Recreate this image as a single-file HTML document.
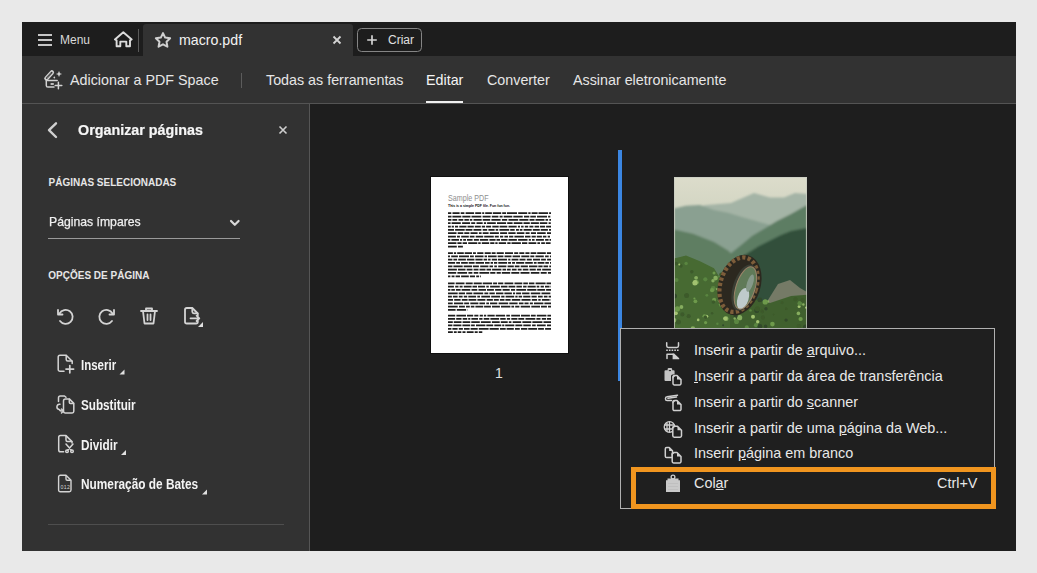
<!DOCTYPE html>
<html><head><meta charset="utf-8">
<style>
*{margin:0;padding:0;box-sizing:border-box}
html,body{width:1037px;height:573px;overflow:hidden;background:#e9e9e9;font-family:"Liberation Sans",sans-serif}
.a{position:absolute;white-space:nowrap;line-height:1}
#win{position:absolute;left:22px;top:22px;width:994px;height:529px;background:#1e1e1e;overflow:hidden}
#tabbar{position:absolute;left:0;top:0;width:994px;height:34px;background:#1d1d1d}
#tab{position:absolute;left:121px;top:2px;width:210px;height:32px;background:#323232;border-radius:3px 3px 0 0}
#toolbar{position:absolute;left:0;top:34px;width:994px;height:48px;background:#323232;border-bottom:1px solid #545454}
#panel{position:absolute;left:0;top:82px;width:288px;height:447px;background:#323232;border-right:1px solid #555555}
.t{color:#e6e6e6}
svg{position:absolute;overflow:visible}
</style></head>
<body>
<div id="win">
  <div id="tabbar"></div>
  <div id="tab"></div>
  <div id="toolbar"></div>
  <div id="panel"></div>
</div>

<!-- tab bar content (absolute page coords) -->
<svg style="left:0;top:0" width="1037" height="573" viewBox="0 0 1037 573">
  <g stroke="#c6c6c6" stroke-width="1.9" fill="none">
    <path d="M38 35H52M38 40H52M38 45H52"/>
  </g>
  <!-- home -->
  <path d="M123.3 32.2L114.9 39.5L116.6 40.3V46.3H120.3V41.6H126.3V46.3H130V40.3L131.7 39.5Z" stroke="#dcdcdc" stroke-width="1.9" fill="none" stroke-linejoin="round"/>
  <path d="M138.5 29V52" stroke="#5a5a5a" stroke-width="1"/>
  <!-- star -->
  <path d="M163.00 33.10L165.17 37.61L170.13 38.28L166.52 41.74L167.41 46.67L163.00 44.30L158.59 46.67L159.48 41.74L155.87 38.28L160.83 37.61Z" stroke="#d0d0d0" stroke-width="2" fill="none" stroke-linejoin="round"/>
  <!-- tab close -->
  <path d="M333.5 36.5L340.5 43.5M340.5 36.5L333.5 43.5" stroke="#d4d4d4" stroke-width="1.8"/>
  <!-- criar -->
  <rect x="357.5" y="28.5" width="64" height="23" rx="4" stroke="#858585" stroke-width="1" fill="none"/>
  <path d="M372 35.2V44.8M367.2 40H376.8" stroke="#d4d4d4" stroke-width="1.7"/>

  <!-- Adicionar icon -->
  <path d="M46.4 78.4L51.9 72.4" stroke="#d2d2d2" stroke-width="4.4" stroke-linecap="round"/>
  <path d="M46.6 78.1L51.7 72.6" stroke="#323232" stroke-width="1.6" stroke-linecap="round"/>
  <path d="M46.9 77.8L51.4 72.9" stroke="#bdbdbd" stroke-width="0.9" stroke-dasharray="0.9 0.7"/>
  <g stroke="#d2d2d2" stroke-width="1.5" fill="none" stroke-linecap="round" stroke-linejoin="round">
    <path d="M46.3 79.5V85.4A1.6 1.6 0 0 0 47.9 87H54"/>
    <path d="M47.5 80.4H57.2"/>
    <path d="M58.4 82.3V88.8M55.2 85.5H61.8"/>
  </g>
  <rect x="50.6" y="83" width="3.2" height="2" fill="#bcbcbc"/>
  <path d="M54.3 76.3L55.3 77.6L54.3 78.8L53.3 77.6Z" fill="#d2d2d2"/>
  <path d="M59 71L60 73.3L62.1 74L60 74.8L59 77.1L58 74.8L55.9 74L58 73.3Z" fill="#d2d2d2"/>
  <path d="M241.5 73V88" stroke="#5c5c5c" stroke-width="1"/>
  <!-- Editar underline -->
  <rect x="426" y="101" width="37" height="2" fill="#f0f0f0"/>
</svg>

<div class="a t" style="left:60px;top:34px;font-size:12px;color:#d9d9d9">Menu</div>
<div class="a t" style="left:179px;top:33.2px;font-size:14.2px;color:#f2f2f2">macro.pdf</div>
<div class="a t" style="left:388px;top:34px;font-size:12px;color:#e0e0e0">Criar</div>

<div class="a t" style="left:70px;top:72.9px;font-size:14.3px">Adicionar a PDF Space</div>
<div class="a t" style="left:266px;top:72.9px;font-size:14.3px">Todas as ferramentas</div>
<div class="a t" style="left:426px;top:72.9px;font-size:14.3px;color:#f5f5f5">Editar</div>
<div class="a t" style="left:487px;top:72.9px;font-size:14.3px">Converter</div>
<div class="a t" style="left:573px;top:72.9px;font-size:14.3px">Assinar eletronicamente</div>

<!-- LEFT PANEL -->
<svg style="left:0;top:0" width="1037" height="573" viewBox="0 0 1037 573">
  <path d="M56 123.3L49 130.2L56 137" stroke="#d0d0d0" stroke-width="2.4" fill="none" stroke-linecap="round" stroke-linejoin="round"/>
  <path d="M279.5 126.5L286.5 133.5M286.5 126.5L279.5 133.5" stroke="#cfcfcf" stroke-width="1.6"/>
  <path d="M231 221L234.8 224.8L238.6 221" stroke="#d8d8d8" stroke-width="2.2" fill="none" stroke-linecap="round" stroke-linejoin="round"/>
  <rect x="48" y="238" width="192" height="1" fill="#9a9a9a"/>
  <!-- undo -->
  <g stroke="#d4d4d4" stroke-width="1.8" fill="none" stroke-linecap="round" stroke-linejoin="round">
    <path d="M59.5 313.5A7 7 0 1 1 60 321"/>
    <path d="M58 310V314.5H62.5"/>
    <!-- redo -->
    <path d="M112.5 313.5A7 7 0 1 0 112 321"/>
    <path d="M114 310V314.5H109.5"/>
    <!-- trash -->
    <path d="M141 311H157"/>
    <path d="M146 311V308.5H152V311"/>
    <path d="M143 311L144.5 323.5H153.5L155 311"/>
    <path d="M147.5 314.5V320M150.5 314.5V320"/>
    <!-- extract -->
    <path d="M197.8 315.5V313.5L192.3 308H186.8A1.8 1.8 0 0 0 185 309.8V321.7A1.8 1.8 0 0 0 186.8 323.5H196A1.8 1.8 0 0 0 197.8 321.7V321"/>
    <path d="M192.3 308.3V311.8A1.5 1.5 0 0 0 193.8 313.3H197.5"/>
    <path d="M190.5 318.3H199.3M196.6 315.6L199.3 318.3L196.6 321"/>
  </g>
  <path d="M203 322V327H198Z" fill="#e0e0e0"/>
  <!-- inserir -->
  <g stroke="#d4d4d4" stroke-width="1.5" fill="none" stroke-linecap="round" stroke-linejoin="round">
    <path d="M64 371.3H60A1.8 1.8 0 0 1 58.2 369.5V357A1.8 1.8 0 0 1 60 355.2H66.2L72.2 361.2V363.5"/>
    <path d="M66.2 355.5V359.5A1.5 1.5 0 0 0 67.7 361H72"/>
    <path d="M69.8 365.5V372.8M66 369.1H73.6" stroke-width="1.7"/>
  </g>
  <path d="M124.5 369.5V374.5H119.5Z" fill="#e0e0e0"/>
  <!-- substituir -->
  <g stroke="#d4d4d4" stroke-width="1.5" fill="none" stroke-linecap="round" stroke-linejoin="round">
    <path d="M58.5 401.5V397.8A1.8 1.8 0 0 1 60.3 396H64.5L66 397.3"/>
    <path d="M65.5 398.9H69.3L73.8 403.4V411.3A1.6 1.6 0 0 1 72.2 412.9H65.1A1.6 1.6 0 0 1 63.5 411.3V400.9A2 2 0 0 1 65.5 398.9Z"/>
    <path d="M69.3 399.2V402.2A1.2 1.2 0 0 0 70.5 403.4H73.5"/>
    <path d="M60 404.2A2.6 2.6 0 0 0 59.2 409.5A3.2 3.2 0 0 0 62.2 411H63"/>
    <path d="M61.5 409L63.5 411L61.5 413"/>
  </g>
  <!-- dividir -->
  <g stroke="#d4d4d4" stroke-width="1.5" fill="none" stroke-linecap="round" stroke-linejoin="round">
    <path d="M63.6 451.8H60.5A1.8 1.8 0 0 1 58.7 450V437.4A1.8 1.8 0 0 1 60.5 435.6H66L72 441.6V443"/>
    <path d="M66 435.9V439.9A1.5 1.5 0 0 0 67.5 441.4H71.8"/>
    <path d="M66 444L71.2 450M73 444L67.8 450"/>
    <circle cx="67" cy="451.2" r="1.3"/><circle cx="72" cy="451.2" r="1.3"/>
  </g>
  <path d="M126 450V455H121Z" fill="#e0e0e0"/>
  <!-- bates -->
  <g stroke="#d4d4d4" stroke-width="1.4" fill="none" stroke-linejoin="round">
    <path d="M60.3 475.2H66L71 480.2V490A1.7 1.7 0 0 1 69.3 491.7H60.3A1.7 1.7 0 0 1 58.6 490V476.9A1.7 1.7 0 0 1 60.3 475.2Z"/>
    <path d="M66 475.5V479A1.2 1.2 0 0 0 67.2 480.2H70.7"/>
  </g>
  <text x="65.2" y="489.3" font-family="Liberation Sans" font-size="5.2" fill="#d4d4d4" text-anchor="middle" textLength="9.5">012</text>
  <path d="M207 489.5V494.5H202Z" fill="#e0e0e0"/>
  <rect x="48" y="524" width="236" height="1" fill="#4e4e4e"/>
</svg>
<div class="a" style="left:78.3px;top:123.2px;font-size:14.4px;font-weight:bold;color:#f6f6f6;-webkit-text-stroke:0.2px #f6f6f6;transform:scaleX(0.995);transform-origin:0 0">Organizar páginas</div>
<div class="a" style="left:48.5px;top:178px;font-size:10px;font-weight:bold;color:#e6e6e6">PÁGINAS SELECIONADAS</div>
<div class="a" style="left:48.5px;top:215.1px;font-size:13.5px;color:#f0f0f0;-webkit-text-stroke:0.25px #f0f0f0;transform:scaleX(0.905);transform-origin:0 0">Páginas ímpares</div>
<div class="a" style="left:48.3px;top:270.6px;font-size:10px;font-weight:bold;color:#e6e6e6">OPÇÕES DE PÁGINA</div>
<div class="a" style="left:80.5px;top:357.6px;font-size:14px;font-weight:bold;color:#f4f4f4;transform:scaleX(0.82);transform-origin:0 0">Inserir</div>
<div class="a" style="left:81px;top:397.6px;font-size:14px;font-weight:bold;color:#f4f4f4;transform:scaleX(0.836);transform-origin:0 0">Substituir</div>
<div class="a" style="left:80.5px;top:437.6px;font-size:14px;font-weight:bold;color:#f4f4f4;transform:scaleX(0.84);transform-origin:0 0">Dividir</div>
<div class="a" style="left:80.5px;top:477.4px;font-size:14px;font-weight:bold;color:#f4f4f4;transform:scaleX(0.846);transform-origin:0 0">Numeração de Bates</div>

<!-- MAIN AREA -->
<svg style="left:0;top:0" width="1037" height="573" viewBox="0 0 1037 573">
  <defs>
    <linearGradient id="sky" x1="0" y1="0" x2="0" y2="1">
      <stop offset="0" stop-color="#dcdccb"/><stop offset="0.2" stop-color="#d2d5c2"/><stop offset="0.5" stop-color="#b8c5b4"/><stop offset="1" stop-color="#a8b8a6"/>
    </linearGradient>
    <filter id="bl" x="-10%" y="-10%" width="120%" height="120%"><feGaussianBlur stdDeviation="1.2"/></filter>
    <filter id="bl2" x="-10%" y="-10%" width="120%" height="120%"><feGaussianBlur stdDeviation="0.6"/></filter>
    <clipPath id="imgclip"><rect x="674" y="177" width="133" height="176"/></clipPath>
  </defs>
  <!-- page 1 -->
  <rect x="430.5" y="176.5" width="138" height="177" fill="#ffffff" stroke="#101010" stroke-width="1"/>
  <text x="448" y="201.2" font-family="Liberation Sans" font-size="8.4" fill="#8e8e8e" textLength="40.5" lengthAdjust="spacingAndGlyphs">Sample PDF</text>
  <text x="448" y="206.9" font-family="Liberation Sans" font-weight="bold" font-size="3.9" fill="#111" textLength="62" lengthAdjust="spacingAndGlyphs">This is a simple PDF file. Fun fun fun.</text>
  <g stroke="#1e1e1e" stroke-width="1.75" fill="none">
<path d="M448 213.20H551.0" stroke-dasharray="3.3 1.2 7.1 1.1 3.7 1.2 8.5 1.1 6.0 1.0 2.0 1.0 6.7 0.9 8.4 1.0 3.9 0.9 10.0 1.2 9.0 1.1 2.3 1.0 6.0 0.9 9.6 1.0 3.2 1.2 3.0 1.3 5.6 1.1 4.7 1.1"/>
<path d="M448 216.53H551.0" stroke-dasharray="3.5 0.9 8.9 1.0 8.2 1.0 9.8 1.3 8.0 1.2 6.6 1.2 3.0 1.1 8.6 1.0 9.4 1.3 5.3 1.0 5.6 1.1 10.0 1.1 2.2 0.9 7.7 1.3 6.0 1.1 6.4 1.2 3.8 1.1 6.5 1.1"/>
<path d="M448 219.86H551.0" stroke-dasharray="3.4 1.0 4.8 1.3 4.8 1.1 4.5 0.9 2.5 1.2 8.2 1.0 7.5 1.2 9.2 1.3 5.3 1.3 9.7 1.1 9.1 1.1 5.0 1.0 9.0 1.0 2.6 1.2 8.2 1.1 8.7 0.9 4.1 1.0 5.4 1.0"/>
<path d="M448 223.19H551.0" stroke-dasharray="2.6 1.0 9.2 1.3 8.0 1.1 4.0 1.3 6.2 1.2 2.2 1.0 8.7 1.2 9.1 1.1 5.4 1.1 8.8 1.0 6.3 1.0 8.1 0.9 7.5 1.3 2.2 1.1 7.2 1.2 6.7 1.0 5.2 1.3 9.2 1.0"/>
<path d="M448 226.52H551.0" stroke-dasharray="2.8 0.9 2.2 1.1 3.1 1.2 7.2 1.0 6.3 1.0 6.0 1.0 3.3 1.0 5.0 1.2 6.4 0.9 7.7 1.2 8.2 1.2 2.1 1.1 2.5 1.2 3.4 1.2 4.0 1.2 4.5 0.9 5.1 1.0 9.2 1.0"/>
<path d="M448 229.85H551.0" stroke-dasharray="6.0 1.1 9.6 0.9 6.8 1.1 7.9 1.3 4.5 1.2 6.2 1.1 2.5 1.2 9.8 1.0 4.5 1.3 2.9 0.9 2.6 1.2 8.1 1.1 7.0 0.9 7.2 1.1 6.1 1.1 5.2 1.0 2.4 1.1 4.0 1.2"/>
<path d="M448 233.18H551.0" stroke-dasharray="8.5 1.2 5.6 1.0 5.1 1.1 7.1 1.3 2.7 1.1 5.9 1.2 9.1 1.2 7.0 1.2 7.3 1.2 7.6 1.2 4.0 1.3 5.1 1.1 8.6 1.3 9.9 0.9 4.5 1.0 5.1 1.0 6.4 0.9 4.4 1.3"/>
<path d="M448 236.51H551.0" stroke-dasharray="7.9 1.1 2.9 1.3 7.6 1.0 4.7 1.2 7.5 1.0 9.6 1.0 4.0 1.2 3.2 1.2 3.6 1.1 4.2 1.1 9.5 1.1 5.5 1.1 4.2 1.0 5.1 1.0 3.5 1.3 2.3 1.2 9.5 1.2 2.2 1.1"/>
<path d="M448 239.84H551.0" stroke-dasharray="2.3 1.1 7.6 1.0 2.1 1.1 2.8 1.0 5.6 1.3 5.0 1.0 8.3 1.2 6.2 0.9 3.5 1.1 6.4 1.0 8.4 1.2 9.4 1.3 2.1 1.1 2.6 1.3 8.0 1.2 3.5 0.9 8.5 1.1 7.0 1.1"/>
<path d="M448 243.17H551.0" stroke-dasharray="8.4 1.0 4.2 1.0 4.4 1.2 9.1 0.9 2.5 1.1 7.4 1.0 4.2 0.9 2.3 1.1 7.4 1.2 3.3 0.9 9.4 1.1 5.3 1.2 7.8 1.1 2.6 1.2 3.7 0.9 4.8 1.1 7.0 1.0 7.7 1.1"/>
<path d="M448 246.50H462.9" stroke-dasharray="8.8 1.2 9.3 1.2 3.7 1.2 9.2 1.1 9.3 1.3 5.1 1.3 9.5 1.2 2.1 1.0 6.9 1.1 8.0 1.2 3.3 1.3 6.3 1.3 3.7 1.3 6.4 1.2 7.9 1.3 4.9 0.9 5.2 1.0 6.3 1.2"/>
<path d="M448 253.00H551.0" stroke-dasharray="4.9 1.0 2.2 1.1 6.6 0.9 7.3 1.0 2.9 1.3 6.2 1.3 6.1 0.9 3.9 1.1 7.1 1.2 8.0 1.2 4.0 1.1 5.0 1.1 4.1 1.1 5.7 0.9 8.6 1.1 8.4 1.2 7.8 1.3 5.0 1.1"/>
<path d="M448 256.33H551.0" stroke-dasharray="2.0 1.2 6.7 1.1 10.0 1.0 3.8 1.2 8.5 1.1 2.4 1.0 8.6 1.1 5.7 1.1 7.0 1.1 7.5 1.2 8.0 1.0 4.0 1.2 8.3 1.3 3.6 1.2 9.1 0.9 4.5 1.2 3.2 1.2 4.1 1.2"/>
<path d="M448 259.66H551.0" stroke-dasharray="4.4 1.0 3.7 1.1 7.7 1.0 7.5 1.0 7.2 1.0 3.5 1.0 2.5 1.2 5.3 0.9 9.0 1.2 2.2 1.2 6.8 1.1 6.0 1.3 5.0 1.2 7.1 1.0 4.8 1.2 7.1 1.1 6.1 1.0 8.3 0.9"/>
<path d="M448 262.99H551.0" stroke-dasharray="7.1 1.1 3.8 1.1 6.7 0.9 5.9 1.0 8.4 1.0 4.6 1.0 2.4 1.0 3.2 1.1 8.8 1.0 2.9 1.1 2.9 1.1 8.1 1.0 7.6 1.1 2.7 1.0 6.8 0.9 3.6 1.1 8.5 1.1 7.3 0.9"/>
<path d="M448 266.32H551.0" stroke-dasharray="4.4 1.0 9.3 1.0 8.3 0.9 6.0 1.3 8.2 1.1 3.5 1.3 2.6 1.3 8.2 1.2 6.2 1.0 4.7 1.2 7.2 1.1 8.4 0.9 4.3 0.9 4.6 1.2 8.0 1.0 4.5 0.9 7.3 1.1 3.9 1.0"/>
<path d="M448 269.65H551.0" stroke-dasharray="8.9 1.1 7.5 1.2 5.8 1.1 4.9 1.0 6.0 1.0 4.6 1.0 9.3 1.1 3.6 0.9 3.7 1.2 4.7 1.2 3.8 1.2 5.6 1.2 6.2 1.1 4.2 1.1 8.7 1.2 5.8 1.0 9.1 1.2 3.2 1.2"/>
<path d="M448 272.98H551.0" stroke-dasharray="8.2 1.2 9.7 1.3 4.0 1.3 4.6 1.1 9.8 1.0 5.2 1.2 4.2 1.0 8.4 1.1 8.0 1.2 9.0 1.3 8.6 1.3 6.0 1.2 6.1 1.3 7.2 1.1 7.3 1.0 3.0 1.1 3.1 0.9 2.7 1.1"/>
<path d="M448 276.31H480.9" stroke-dasharray="2.4 1.2 2.9 1.1 4.4 1.1 7.7 1.1 5.1 1.2 2.9 1.0 7.6 1.2 9.8 1.0 7.0 1.0 7.6 1.2 3.1 1.0 9.5 1.0 7.1 1.2 4.2 1.2 2.0 1.0 3.3 1.0 3.7 0.9 8.4 1.0"/>
<path d="M448 283.30H551.0" stroke-dasharray="6.6 1.1 8.8 1.2 7.0 1.0 8.1 0.9 9.4 1.0 4.0 1.0 5.2 1.2 8.8 1.2 7.8 1.0 4.6 1.0 5.5 1.2 10.0 0.9 9.7 1.3 5.7 1.2 8.3 1.0 6.9 1.3 9.0 1.3 2.7 1.2"/>
<path d="M448 286.63H551.0" stroke-dasharray="5.9 1.3 3.3 1.1 3.0 1.2 7.8 0.9 4.5 1.0 7.1 1.2 2.5 1.3 9.7 1.1 6.6 1.0 6.8 1.1 5.5 1.2 3.5 1.0 8.1 1.0 2.6 1.3 3.3 1.1 4.5 1.0 4.8 1.1 2.9 1.1"/>
<path d="M448 289.96H551.0" stroke-dasharray="2.4 0.9 3.6 1.0 4.7 1.0 8.7 1.2 5.8 1.2 7.5 1.0 6.9 1.2 6.3 1.2 7.1 1.3 4.1 1.2 9.8 1.1 9.2 0.9 7.8 1.0 8.0 1.1 6.3 1.0 4.1 1.2 7.1 1.2 2.9 1.0"/>
<path d="M448 293.29H551.0" stroke-dasharray="9.7 1.0 6.3 1.2 6.1 1.1 9.8 1.2 3.9 1.1 5.4 1.2 7.4 1.0 7.5 1.1 2.1 1.0 5.0 1.0 7.4 1.3 9.5 1.2 8.9 1.1 6.7 1.3 2.5 1.0 5.0 1.0 5.4 0.9 7.4 1.3"/>
<path d="M448 296.62H551.0" stroke-dasharray="3.9 1.0 4.7 1.2 3.8 1.2 3.4 1.1 7.8 1.2 2.7 1.3 8.8 1.1 8.9 1.1 3.3 1.1 8.6 1.1 2.3 1.0 3.5 1.1 7.2 1.1 5.2 1.3 4.7 1.2 3.6 1.1 3.4 0.9 4.7 0.9"/>
<path d="M448 299.95H551.0" stroke-dasharray="5.0 1.2 6.4 1.2 5.8 0.9 7.8 1.1 8.0 1.3 6.2 1.0 4.9 1.1 4.6 0.9 5.2 1.2 8.5 1.2 9.1 1.2 5.3 1.2 2.4 1.2 7.7 1.0 5.8 1.0 8.4 1.1 8.2 1.3 8.2 1.1"/>
<path d="M448 303.28H551.0" stroke-dasharray="4.7 1.3 9.2 1.0 4.9 1.2 8.1 1.0 5.6 1.3 2.7 1.0 7.3 1.3 9.6 1.1 8.3 1.3 4.6 1.0 4.1 1.2 3.1 1.1 9.4 1.0 7.0 1.1 9.7 1.1 5.9 1.3 8.0 1.0 8.4 1.1"/>
<path d="M448 306.61H551.0" stroke-dasharray="9.7 1.3 5.9 1.1 3.8 1.0 3.6 1.0 7.8 0.9 6.8 1.1 7.9 1.1 9.4 1.0 2.7 1.1 4.2 1.3 9.4 1.2 8.7 1.0 5.9 1.1 4.8 1.0 5.8 1.2 2.2 1.1 3.0 1.3 6.4 1.1"/>
<path d="M448 309.94H467.5" stroke-dasharray="7.6 1.2 9.3 1.1 4.2 1.2 2.4 1.2 4.5 1.2 3.1 1.1 3.4 0.9 4.1 1.2 5.1 1.1 8.3 1.3 4.1 1.2 8.3 1.2 4.8 1.1 8.3 1.0 5.9 1.2 8.8 1.0 7.3 1.0 3.3 1.1"/>
<path d="M448 315.50H551.0" stroke-dasharray="7.2 1.2 9.6 1.0 6.2 1.1 4.1 1.3 3.2 1.0 2.3 1.2 7.3 1.0 9.4 1.2 3.6 1.3 8.8 1.0 8.9 1.0 4.8 1.1 9.6 1.0 5.1 1.0 8.6 1.0 8.8 1.0 6.4 1.3 4.1 1.1"/>
<path d="M448 318.83H551.0" stroke-dasharray="7.1 1.1 5.3 1.2 4.5 1.0 2.1 1.1 6.6 1.2 3.3 1.2 5.6 1.1 8.7 1.1 5.5 1.2 3.2 1.2 6.1 0.9 5.9 1.3 9.8 1.1 4.1 1.3 4.3 0.9 4.0 1.1 7.4 0.9 4.7 1.2"/>
<path d="M448 322.16H551.0" stroke-dasharray="4.8 1.0 7.7 1.1 7.6 1.1 8.5 1.1 9.8 1.2 7.8 1.1 6.9 1.1 2.6 1.3 8.5 1.2 8.9 1.1 10.0 1.1 9.8 0.9 5.0 1.1 8.5 1.1 8.3 1.0 7.4 1.2 6.8 0.9 7.3 0.9"/>
<path d="M448 325.49H551.0" stroke-dasharray="4.4 0.9 8.1 1.0 7.8 0.9 3.7 1.2 9.4 0.9 6.9 1.1 7.0 0.9 2.1 0.9 9.1 1.1 6.9 1.0 7.5 1.3 3.6 1.2 8.8 1.3 6.5 1.2 4.8 1.2 4.5 1.1 7.0 1.3 8.3 0.9"/>
<path d="M448 328.82H551.0" stroke-dasharray="3.4 1.0 5.2 1.2 4.1 1.1 5.6 1.0 7.1 1.1 9.8 1.0 9.2 1.2 5.7 0.9 7.2 1.2 4.8 1.2 6.3 0.9 8.9 1.0 5.8 1.2 9.0 1.2 4.9 1.2 3.2 1.1 5.5 1.2 7.8 1.2"/>
<path d="M448 332.15H482.3" stroke-dasharray="4.8 1.1 2.8 1.0 3.6 1.2 3.0 1.3 6.8 1.1 3.0 1.1 6.5 1.0 9.8 1.0 5.5 1.0 5.0 1.0 8.8 0.9 4.9 1.1 5.8 1.0 5.9 0.9 4.5 1.1 8.1 1.1 5.3 1.2 4.2 1.1"/>
  </g>
  <!-- page 2 image -->
  <g clip-path="url(#imgclip)">
    <rect x="674" y="177" width="133" height="176" fill="url(#sky)"/>
    <g filter="url(#bl)">
<polygon points="674.0,212.0 690.0,208.0 707.0,205.0 731.0,203.0 754.0,193.0 770.0,197.5 784.0,197.5 795.0,193.0 807.0,194.0 807.0,300.0 674.0,300.0" fill="#a4b4a6"/>
<polygon points="674.0,208.5 686.0,205.7 700.0,205.0 714.0,210.0 728.0,212.7 742.0,217.0 756.0,221.0 770.0,225.0 790.0,230.0 807.0,232.0 807.0,300.0 674.0,300.0" fill="#8aa091"/>
<polygon points="720.0,262.0 740.0,246.0 752.0,236.0 777.0,221.0 791.0,214.0 807.0,205.0 807.0,300.0 720.0,300.0" fill="#5d7d63"/>
<polygon points="674.0,229.5 693.0,233.7 714.0,242.0 728.0,250.4 740.0,262.0 745.0,300.0 674.0,300.0" fill="#5f7e62"/>
<polygon points="740.0,258.0 758.6,246.2 781.0,235.0 791.0,231.0 807.0,228.0 807.0,330.0 740.0,330.0" fill="#33503a"/>
    </g>
    <g filter="url(#bl2)">
<polygon points="768.0,300.0 778.0,284.0 790.0,280.0 800.0,288.0 807.0,292.0 807.0,305.0 768.0,306.0" fill="#747a66"/>
<polygon points="674.0,258.4 686.0,255.6 700.0,261.2 714.0,268.2 720.0,278.0 726.0,300.0 736.0,330.0 674.0,330.0" fill="#466a33"/>
<polygon points="730.0,305.0 753.0,299.0 770.0,303.0 791.0,296.0 807.0,294.7 807.0,330.0 730.0,330.0" fill="#40612f"/>
<circle cx="756.8" cy="310.4" r="2.5" fill="#31482a"/>
<circle cx="772.4" cy="324.1" r="2.3" fill="#6e9a4b"/>
<circle cx="680.9" cy="265.9" r="1.8" fill="#3c5a2b"/>
<circle cx="706.8" cy="295.3" r="1.4" fill="#5a8540"/>
<circle cx="698.2" cy="319.9" r="1.3" fill="#a2c26f"/>
<circle cx="674.2" cy="320.2" r="2.2" fill="#86ad5e"/>
<circle cx="696.1" cy="277.8" r="1.9" fill="#86ad5e"/>
<circle cx="799.1" cy="306.5" r="1.5" fill="#a2c26f"/>
<circle cx="714.1" cy="299.8" r="2.0" fill="#6e9a4b"/>
<circle cx="721.3" cy="277.3" r="1.5" fill="#31482a"/>
<circle cx="738.0" cy="307.6" r="1.4" fill="#6e9a4b"/>
<circle cx="798.9" cy="326.1" r="2.4" fill="#3c5a2b"/>
<circle cx="676.4" cy="313.9" r="1.6" fill="#3c5a2b"/>
<circle cx="768.1" cy="301.4" r="1.2" fill="#86ad5e"/>
<circle cx="706.7" cy="316.3" r="1.6" fill="#a2c26f"/>
<circle cx="721.2" cy="293.9" r="1.2" fill="#a2c26f"/>
<circle cx="773.5" cy="314.6" r="1.1" fill="#3c5a2b"/>
<circle cx="719.3" cy="300.4" r="1.5" fill="#86ad5e"/>
<circle cx="715.6" cy="278.1" r="2.3" fill="#86ad5e"/>
<circle cx="757.4" cy="308.8" r="2.6" fill="#3c5a2b"/>
<circle cx="753.0" cy="316.8" r="2.0" fill="#a2c26f"/>
<circle cx="693.4" cy="328.4" r="1.1" fill="#31482a"/>
<circle cx="739.6" cy="317.7" r="2.6" fill="#86ad5e"/>
<circle cx="696.5" cy="282.3" r="2.4" fill="#6e9a4b"/>
<circle cx="713.2" cy="288.4" r="2.4" fill="#5a8540"/>
<circle cx="738.9" cy="309.4" r="1.4" fill="#a2c26f"/>
<circle cx="736.5" cy="322.5" r="1.6" fill="#6e9a4b"/>
<circle cx="805.5" cy="326.9" r="2.5" fill="#31482a"/>
<circle cx="682.4" cy="314.4" r="2.1" fill="#3c5a2b"/>
<circle cx="762.3" cy="311.7" r="1.9" fill="#3c5a2b"/>
<circle cx="762.9" cy="317.5" r="2.2" fill="#3c5a2b"/>
<circle cx="799.8" cy="303.4" r="2.4" fill="#5a8540"/>
<circle cx="737.1" cy="312.8" r="2.1" fill="#3c5a2b"/>
<circle cx="735.6" cy="316.1" r="2.1" fill="#31482a"/>
<circle cx="721.4" cy="274.8" r="2.2" fill="#3c5a2b"/>
<circle cx="786.1" cy="320.1" r="1.7" fill="#31482a"/>
<circle cx="692.9" cy="328.5" r="2.3" fill="#86ad5e"/>
<circle cx="766.0" cy="308.7" r="1.7" fill="#31482a"/>
<circle cx="756.0" cy="325.2" r="2.1" fill="#5a8540"/>
<circle cx="730.0" cy="301.4" r="1.4" fill="#31482a"/>
<circle cx="752.0" cy="301.4" r="1.4" fill="#86ad5e"/>
<circle cx="765.2" cy="301.9" r="2.6" fill="#6e9a4b"/>
<circle cx="720.7" cy="304.4" r="1.9" fill="#6e9a4b"/>
<circle cx="705.6" cy="322.6" r="1.6" fill="#6e9a4b"/>
<circle cx="800.6" cy="319.0" r="2.1" fill="#6e9a4b"/>
<circle cx="746.8" cy="327.3" r="2.0" fill="#5a8540"/>
<circle cx="686.6" cy="295.4" r="2.5" fill="#3c5a2b"/>
<circle cx="713.0" cy="280.7" r="1.7" fill="#86ad5e"/>
<circle cx="782.1" cy="302.8" r="1.7" fill="#3c5a2b"/>
<circle cx="694.9" cy="283.1" r="2.5" fill="#a2c26f"/>
<circle cx="802.7" cy="300.3" r="2.3" fill="#3c5a2b"/>
<circle cx="717.4" cy="323.7" r="1.2" fill="#5a8540"/>
<circle cx="757.7" cy="321.7" r="1.7" fill="#a2c26f"/>
<circle cx="737.8" cy="307.8" r="2.5" fill="#a2c26f"/>
<circle cx="795.5" cy="299.3" r="2.2" fill="#3c5a2b"/>
<circle cx="714.0" cy="273.1" r="1.5" fill="#6e9a4b"/>
<circle cx="712.1" cy="290.2" r="2.1" fill="#6e9a4b"/>
<circle cx="679.3" cy="264.4" r="1.0" fill="#a2c26f"/>
<circle cx="798.4" cy="313.4" r="1.8" fill="#86ad5e"/>
<circle cx="786.2" cy="308.8" r="1.5" fill="#3c5a2b"/>
<circle cx="759.8" cy="299.9" r="2.4" fill="#31482a"/>
<circle cx="676.2" cy="263.6" r="1.9" fill="#3c5a2b"/>
<circle cx="718.7" cy="276.6" r="1.0" fill="#5a8540"/>
<circle cx="720.5" cy="305.8" r="1.2" fill="#5a8540"/>
<circle cx="674.4" cy="296.0" r="2.5" fill="#31482a"/>
<circle cx="675.9" cy="313.2" r="2.0" fill="#a2c26f"/>
<circle cx="765.6" cy="326.4" r="1.8" fill="#31482a"/>
<circle cx="726.1" cy="318.7" r="2.4" fill="#86ad5e"/>
<circle cx="735.9" cy="311.6" r="2.3" fill="#3c5a2b"/>
<circle cx="712.1" cy="313.3" r="1.2" fill="#3c5a2b"/>
<circle cx="694.4" cy="298.5" r="1.1" fill="#6e9a4b"/>
<circle cx="704.6" cy="316.3" r="2.1" fill="#6e9a4b"/>
<circle cx="677.4" cy="308.9" r="2.6" fill="#6e9a4b"/>
<circle cx="759.9" cy="326.4" r="2.4" fill="#31482a"/>
<circle cx="806.2" cy="307.6" r="1.2" fill="#a2c26f"/>
<circle cx="695.4" cy="301.3" r="1.9" fill="#6e9a4b"/>
<circle cx="761.8" cy="310.7" r="1.1" fill="#3c5a2b"/>
<circle cx="750.5" cy="310.4" r="1.2" fill="#5a8540"/>
<circle cx="681.4" cy="307.0" r="1.9" fill="#86ad5e"/>
<circle cx="705.3" cy="317.3" r="1.8" fill="#3c5a2b"/>
<circle cx="691.8" cy="271.8" r="1.7" fill="#3c5a2b"/>
<circle cx="676.5" cy="280.0" r="2.1" fill="#5a8540"/>
<circle cx="686.1" cy="263.5" r="1.7" fill="#5a8540"/>
<circle cx="725.2" cy="318.5" r="2.1" fill="#a2c26f"/>
<circle cx="803.4" cy="304.5" r="1.2" fill="#86ad5e"/>
<circle cx="705.3" cy="279.3" r="2.1" fill="#5a8540"/>
<circle cx="713.4" cy="302.0" r="1.8" fill="#3c5a2b"/>
<circle cx="736.5" cy="321.6" r="2.5" fill="#5a8540"/>
<circle cx="717.0" cy="289.1" r="1.2" fill="#86ad5e"/>
<circle cx="695.2" cy="282.5" r="2.4" fill="#a2c26f"/>
<circle cx="688.7" cy="316.2" r="2.1" fill="#3c5a2b"/>
<circle cx="678.4" cy="322.1" r="2.5" fill="#3c5a2b"/>
<circle cx="723.1" cy="325.3" r="1.0" fill="#31482a"/>
<circle cx="734.7" cy="318.5" r="1.2" fill="#86ad5e"/>
    </g>
    <g transform="rotate(17.5 739.5 285)">
      <ellipse cx="739.5" cy="285" rx="21" ry="31" fill="#2c281f"/>
      <ellipse cx="738.5" cy="285" rx="18" ry="28" fill="none" stroke="#7d5d3a" stroke-width="4.2" stroke-dasharray="3.2 2.3"/>
      <ellipse cx="745" cy="286" rx="11.5" ry="24" fill="#3a3d33"/>
      <ellipse cx="746" cy="286" rx="9.5" ry="22" fill="#607a58"/>
      <ellipse cx="747" cy="297" rx="5.5" ry="11" fill="#bfcacb"/><ellipse cx="749" cy="280" rx="3" ry="9" fill="#86998a"/>
      <ellipse cx="746" cy="286" rx="9.5" ry="22" fill="none" stroke="#9b8468" stroke-width="1"/>
    </g>
  </g>
  <rect x="674.5" y="177.5" width="132" height="175" fill="none" stroke="#c9cdc3" stroke-opacity="0.75" stroke-width="1"/>
  <!-- blue bar -->
  <rect x="618" y="150" width="4" height="231" fill="#3b86e2"/>
</svg>
<div class="a" style="left:495px;top:366px;font-size:14px;color:#e0e0e0">1</div>

<!-- CONTEXT MENU -->
<div style="position:absolute;left:620px;top:328px;width:375px;height:181px;background:#1f1f1f;border:1px solid #b0b0b0"></div>
<div style="position:absolute;left:631px;top:467px;width:365px;height:42px;border:5px solid #f0951f"></div>
<svg style="left:0;top:0" width="1037" height="573" viewBox="0 0 1037 573">
  <g stroke="#cfcfcf" stroke-width="1.5" fill="none" stroke-linecap="round" stroke-linejoin="round">
    <!-- icon1: scan/file -->
    <path d="M666.7 342.8V345.8A1.6 1.6 0 0 0 668.3 347.4H676.9A1.6 1.6 0 0 0 678.5 345.8V342.8"/>
    <path d="M666.2 350.3H679" stroke-dasharray="1.6 1.1" stroke-linecap="butt"/>
    <path d="M667 358.6V354.2H673.2"/>
  </g>
  <path d="M672.6 353.4H674.2L679.2 358.2V359.2H672.6Z" fill="#cfcfcf"/>
  <!-- icon2: clipboard + page -->
  <path d="M665.5 370.2H667.6V369.3A1.3 1.3 0 0 1 668.9 368H670.9A1.3 1.3 0 0 1 672.2 369.3V370.2H673.6A1 1 0 0 1 674.6 371.2V374.5H672.5A1.5 1.5 0 0 0 671 376V381H665.5A1 1 0 0 1 664.5 380V371.2A1 1 0 0 1 665.5 370.2Z" fill="#c4c4c4"/>
  <path d="M668.8 370.6H671" stroke="#1f1f1f" stroke-width="1"/>
  <path d="M675.0 375.6H677.0L681.0 379.6V383.6A1.4 1.4 0 0 1 679.6 385.0H674.4A1.4 1.4 0 0 1 673.0 383.6V377.6A2.0 2.0 0 0 1 675.0 375.6Z" fill="#1f1f1f" stroke="#d0d0d0" stroke-width="1.5" stroke-linejoin="round"/><path d="M677.0 375.6V379.6H681.0Z" fill="#d0d0d0"/><path d="M672.4 375.0H676.2L672.4 378.8V376.8A2 2 0 0 1 674.2 375.0Z" fill="#cfcfcf"/>
  <!-- icon3: scanner + page -->
  <g stroke="#d0d0d0" stroke-width="1.5" fill="none" stroke-linecap="round" stroke-linejoin="round">
    <path d="M677.5 395.2L667 396.8A1.7 1.7 0 0 0 665.5 398.5V399A1.6 1.6 0 0 0 667.1 400.6H671.5"/>
    <path d="M668 398.3L676.5 397"/>
    </g>
  <path d="M675.0 400.6H677.0L681.0 404.6V409.2A1.4 1.4 0 0 1 679.6 410.6H674.4A1.4 1.4 0 0 1 673.0 409.2V402.6A2.0 2.0 0 0 1 675.0 400.6Z" fill="#1f1f1f" stroke="#d0d0d0" stroke-width="1.5" stroke-linejoin="round"/><path d="M677.0 400.6V404.6H681.0Z" fill="#d0d0d0"/><path d="M672.4 400.0H676.2L672.4 403.8V401.8A2 2 0 0 1 674.2 400.0Z" fill="#cfcfcf"/>
  <!-- icon4: globe + page -->
  <g stroke="#d0d0d0" stroke-width="1.3" fill="none">
    <circle cx="669.5" cy="427" r="5.3"/>
    <path d="M664.5 425H674.5M664.5 429H672M669.5 421.7V432.3M667 422.5V431.5"/>
  </g>
  <path d="M674.8 426.3H677.5L681.5 430.3V435.8A1.4 1.4 0 0 1 680.1 437.2H674.2A1.4 1.4 0 0 1 672.8 435.8V428.3A2.0 2.0 0 0 1 674.8 426.3Z" fill="#1f1f1f" stroke="#d0d0d0" stroke-width="1.5" stroke-linejoin="round"/><path d="M677.5 426.3V430.3H681.5Z" fill="#d0d0d0"/><path d="M672.2 425.7H676.0L672.2 429.5V427.5A2 2 0 0 1 674.0 425.7Z" fill="#cfcfcf"/>
  <!-- icon5: two pages -->
  <path d="M666.6 447.6H669.2L672.5 450.9V456.2A1.3 1.3 0 0 1 671.2 457.5H666.6A1.3 1.3 0 0 1 665.3 456.2V448.9A1.3 1.3 0 0 1 666.6 447.6Z" fill="none" stroke="#d0d0d0" stroke-width="1.5" stroke-linejoin="round"/>
  <path d="M669.2 447.6V450.9H672.5Z" fill="#d0d0d0"/>
  <path d="M674.2 452.5H677.0L681.0 456.5V461.6A1.4 1.4 0 0 1 679.6 463.0H673.6A1.4 1.4 0 0 1 672.2 461.6V454.5A2.0 2.0 0 0 1 674.2 452.5Z" fill="#1f1f1f" stroke="#d0d0d0" stroke-width="1.5" stroke-linejoin="round"/><path d="M677.0 452.5V456.5H681.0Z" fill="#d0d0d0"/><path d="M671.6 451.9H675.4L671.6 455.7V453.7A2 2 0 0 1 673.4 451.9Z" fill="#cfcfcf"/>
  <!-- paste -->
  <circle cx="673" cy="477" r="1.9" fill="none" stroke="#cfcfcf" stroke-width="1.3"/>
  <path d="M667.5 478.6H678.5V480.2H680V492H666V480.2H667.5Z" fill="#c9c9c9"/>
  <path d="M668 483.5H678M668 486.5H678M668 489.5H678" stroke="#bdbdbd" stroke-width="0.8"/>
</svg>
<div class="a" style="left:694px;top:343.0px;font-size:14.4px;color:#e8e8e8">Inserir a partir de <u>a</u>rquivo...</div>
<div class="a" style="left:694px;top:368.7px;font-size:14.4px;color:#e8e8e8"><u>I</u>nserir a partir da área de transferência</div>
<div class="a" style="left:694px;top:395.0px;font-size:14.4px;color:#e8e8e8">Inserir a partir do <u>s</u>canner</div>
<div class="a" style="left:694px;top:420.5px;font-size:14.4px;color:#e8e8e8">Inserir a partir de uma <u>p</u>ágina da Web...</div>
<div class="a" style="left:694px;top:446.3px;font-size:14.4px;color:#e8e8e8">Inserir <u>p</u>ágina em branco</div>
<div class="a" style="left:694px;top:475.6px;font-size:14.4px;color:#e8e8e8">Col<u>a</u>r</div>
<div class="a" style="left:937px;top:475.6px;font-size:14.4px;color:#e8e8e8">Ctrl+V</div>

</body></html>
